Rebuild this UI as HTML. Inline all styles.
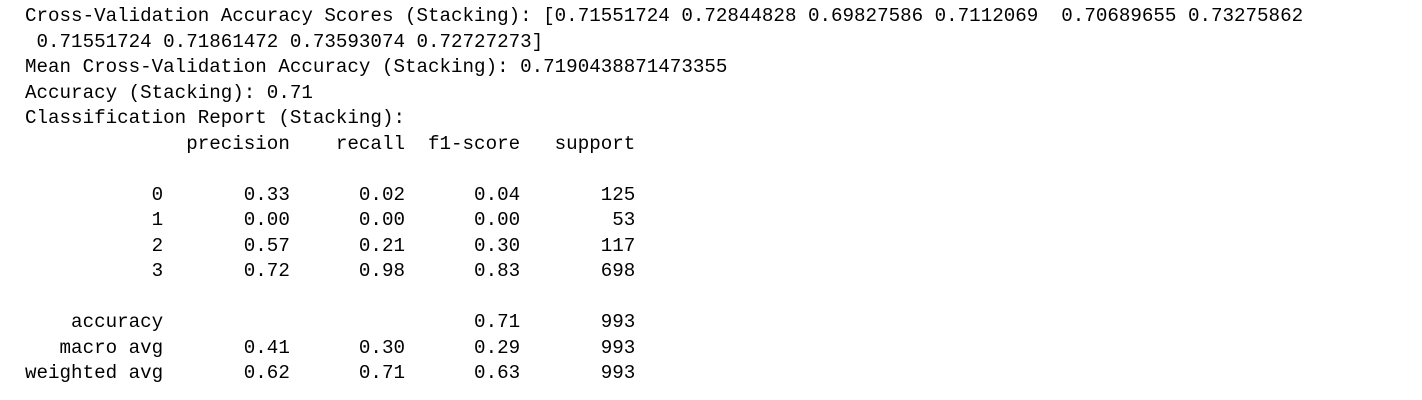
<!DOCTYPE html>
<html><head><meta charset="utf-8"><style>
html,body{margin:0;padding:0;background:#fff;width:1422px;height:400px;overflow:hidden}
pre{margin:0;padding:4px 0 0 25px;font-family:"Liberation Mono",monospace;font-size:19.2px;line-height:25.5px;color:#000}
</style></head><body><pre>Cross-Validation Accuracy Scores (Stacking): [0.71551724 0.72844828 0.69827586 0.7112069  0.70689655 0.73275862
 0.71551724 0.71861472 0.73593074 0.72727273]
Mean Cross-Validation Accuracy (Stacking): 0.7190438871473355
Accuracy (Stacking): 0.71
Classification Report (Stacking):
              precision    recall  f1-score   support

           0       0.33      0.02      0.04       125
           1       0.00      0.00      0.00        53
           2       0.57      0.21      0.30       117
           3       0.72      0.98      0.83       698

    accuracy                           0.71       993
   macro avg       0.41      0.30      0.29       993
weighted avg       0.62      0.71      0.63       993
</pre></body></html>
